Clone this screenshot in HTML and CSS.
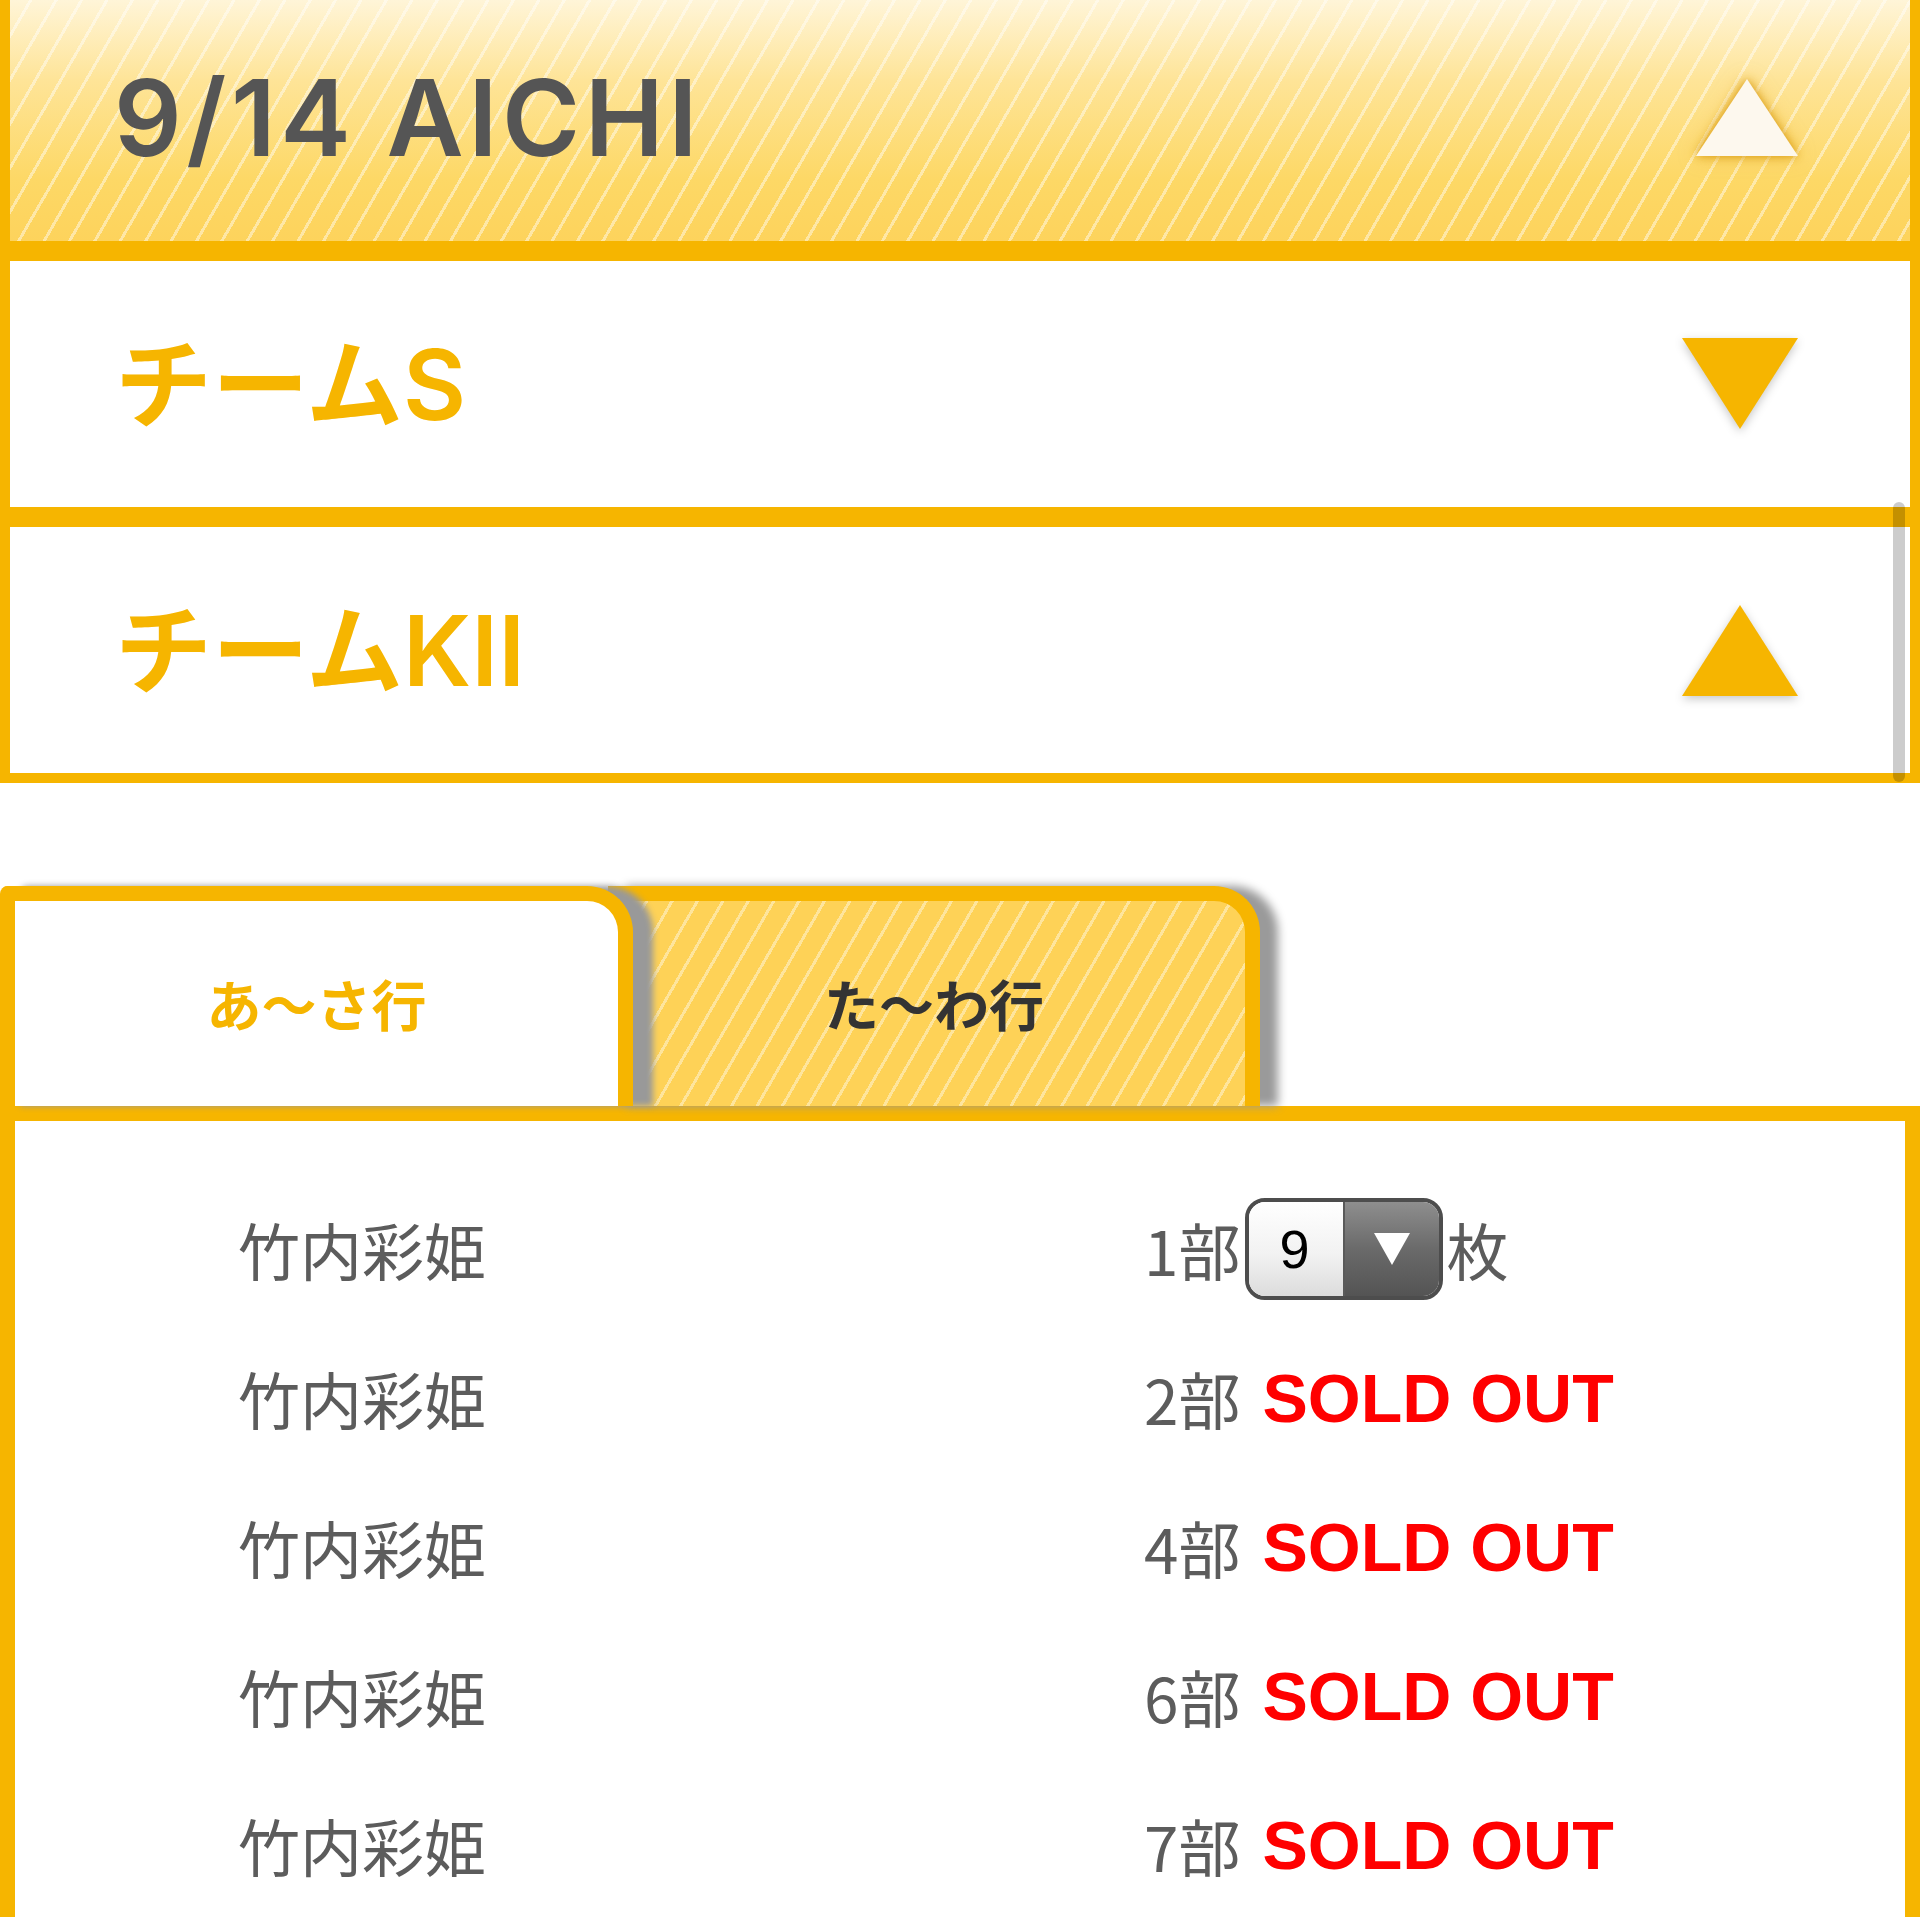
FILE: index.html
```html
<!DOCTYPE html>
<html lang="ja">
<head>
<meta charset="utf-8">
<title>9/14 AICHI</title>
<link rel="stylesheet" href="styles.css">
</head>
<body>
<div class="page">
  <div class="acc acc-date stripes-light">
    <h1 class="acc-title date-title">9/14 AICHI</h1>
    <svg class="tri tri-white" width="110" height="84" viewBox="0 0 110 84"><polygon points="55,3 106,80 4,80" /></svg>
  </div>
  <div class="acc acc-team">
    <h2 class="acc-title team-title">チームS</h2>
    <svg class="tri tri-orange" width="120" height="96" viewBox="0 0 120 96"><polygon points="2,2 118,2 60,93" /></svg>
  </div>
  <div class="acc acc-team">
    <h2 class="acc-title team-title">チームKII</h2>
    <svg class="tri tri-orange" width="120" height="96" viewBox="0 0 120 96"><polygon points="60,3 118,94 2,94" /></svg>
  </div>

  <div class="tabs">
    <div class="tab tab-active">あ〜さ行</div>
    <div class="tab tab-inactive stripes">た〜わ行</div>
  </div>

  <div class="panel">
    <div class="row">
      <span class="name">竹内彩姫</span>
      <span class="slot">1部<span class="select"><span class="sel-val">9</span><span class="sel-btn"><svg width="38" height="34" viewBox="0 0 38 34"><polygon points="1,1 37,1 19,33" fill="#fff"/></svg></span></span>枚</span>
    </div>
    <div class="row">
      <span class="name">竹内彩姫</span>
      <span class="slot">2部<span class="sold">SOLD OUT</span></span>
    </div>
    <div class="row">
      <span class="name">竹内彩姫</span>
      <span class="slot">4部<span class="sold">SOLD OUT</span></span>
    </div>
    <div class="row">
      <span class="name">竹内彩姫</span>
      <span class="slot">6部<span class="sold">SOLD OUT</span></span>
    </div>
    <div class="row">
      <span class="name">竹内彩姫</span>
      <span class="slot">7部<span class="sold">SOLD OUT</span></span>
    </div>
  </div>

  <div class="scroll-indicator"></div>
</div>
</body>
</html>
```

FILE: styles.css
```css
html, body {
  margin: 0;
  padding: 0;
  background: #fff;
}
body {
  font-family: "Liberation Sans", "Noto Sans CJK JP", sans-serif;
}
.page {
  position: relative;
  width: 1920px;
  height: 1917px;
  overflow: hidden;
}

/* accordion headers */
.acc {
  box-sizing: content-box;
  height: 246px;
  border: 10px solid #f6b500;
  display: flex;
  align-items: center;
  justify-content: space-between;
}
.acc-date {
  margin-top: -15px;
  padding: 0 108px 0 104px;
}
.acc-team {
  padding: 0 110px 0 105px;
}
.acc-title {
  margin: 0;
  line-height: 1;
}
.date-title {
  font-family: "Inter", "Liberation Sans", "Noto Sans CJK JP", sans-serif;
  font-weight: 600;
  font-size: 106px;
  letter-spacing: 4.5px;
  color: #555555;
}
.team-title {
  font-family: "Inter", "Liberation Sans", "Noto Sans CJK JP", sans-serif;
  font-weight: 600;
  font-size: 97px;
  color: #f6b500;
}

.stripes-light {
  background-image:
    repeating-linear-gradient(120deg, rgba(255,255,255,0) 0 19px, rgba(255,255,255,0.45) 19px 22px),
    linear-gradient(180deg, #fff6dc 0%, #fee497 35%, #fdd866 75%, #fdd35c 100%);
}
.stripes {
  background-image:
    repeating-linear-gradient(120deg, rgba(255,255,255,0) 0 19px, rgba(255,255,255,0.42) 19px 22px);
  background-color: #fed257;
}

.tri {
  display: block;
  flex: none;
}
.tri-white polygon {
  fill: #fdf8ee;
}
.tri-white {
  filter: drop-shadow(0 0 4px rgba(214, 150, 10, 0.9)) drop-shadow(0 0 8px rgba(230, 170, 30, 0.5));
}
.tri-orange polygon {
  fill: #f6b500;
}
.tri-orange {
  filter: drop-shadow(0 3px 5px rgba(0, 0, 0, 0.22));
}

/* tabs */
.tabs {
  display: flex;
  margin-top: 103px;
  height: 220px;
}
.tab {
  box-sizing: border-box;
  height: 220px;
  border: 15px solid #f6b500;
  border-bottom: 0;
  border-top-right-radius: 46px;
  display: flex;
  align-items: center;
  justify-content: center;
  font-family: "Noto Sans CJK JP", sans-serif;
  font-weight: 700;
  font-size: 55px;
  padding-bottom: 4px;
  box-shadow: 20px 0 6px #999999;
}
.tab-active {
  position: relative;
  z-index: 2;
  width: 633px;
  background: #fff;
  color: #f6b500;
  border-top-left-radius: 8px;
}
.tab-inactive {
  position: relative;
  z-index: 1;
  width: 652px;
  margin-left: -25px;
  color: #333333;
  padding-left: 0;
  box-shadow: 18px 0 10px #9a9a9a;
}

/* panel */
.panel {
  border: 15px solid #f6b500;
  padding: 53px 0 60px 223px;
}
.row {
  display: grid;
  grid-template-columns: 906px auto;
  align-items: center;
  height: 149px;
  font-family: "Noto Sans CJK JP", sans-serif;
  font-size: 62px;
  color: #5c5c5c;
}
.name {
  font-weight: 400;
}
.slot {
  display: flex;
  align-items: center;
}
.sold {
  font-family: "Liberation Sans", sans-serif;
  font-weight: 700;
  font-size: 68px;
  color: #ff0000;
  margin-left: 22px;
}

/* pseudo select */
.select {
  box-sizing: border-box;
  display: inline-flex;
  width: 198px;
  height: 102px;
  margin: 0 3px 0 5px;
  border: 4px solid #4d4d4d;
  border-radius: 20px;
  overflow: hidden;
}
.sel-val {
  width: 90px;
  display: flex;
  align-items: center;
  justify-content: center;
  background: linear-gradient(180deg, #ffffff 0%, #f2f2f2 55%, #dcdcdc 100%);
  font-family: "Liberation Sans", sans-serif;
  font-size: 54px;
  color: #000;
  padding-right: 4px;
}
.sel-btn {
  flex: 1;
  display: flex;
  align-items: center;
  justify-content: center;
  background: linear-gradient(180deg, #8e8e8e 0%, #6a6a6a 50%, #545454 100%);
  border-left: 2px solid #5a5a5a;
}

.scroll-indicator {
  position: absolute;
  left: 1893px;
  top: 502px;
  width: 12px;
  height: 280px;
  border-radius: 6px;
  background: rgba(0, 0, 0, 0.2);
}
```
